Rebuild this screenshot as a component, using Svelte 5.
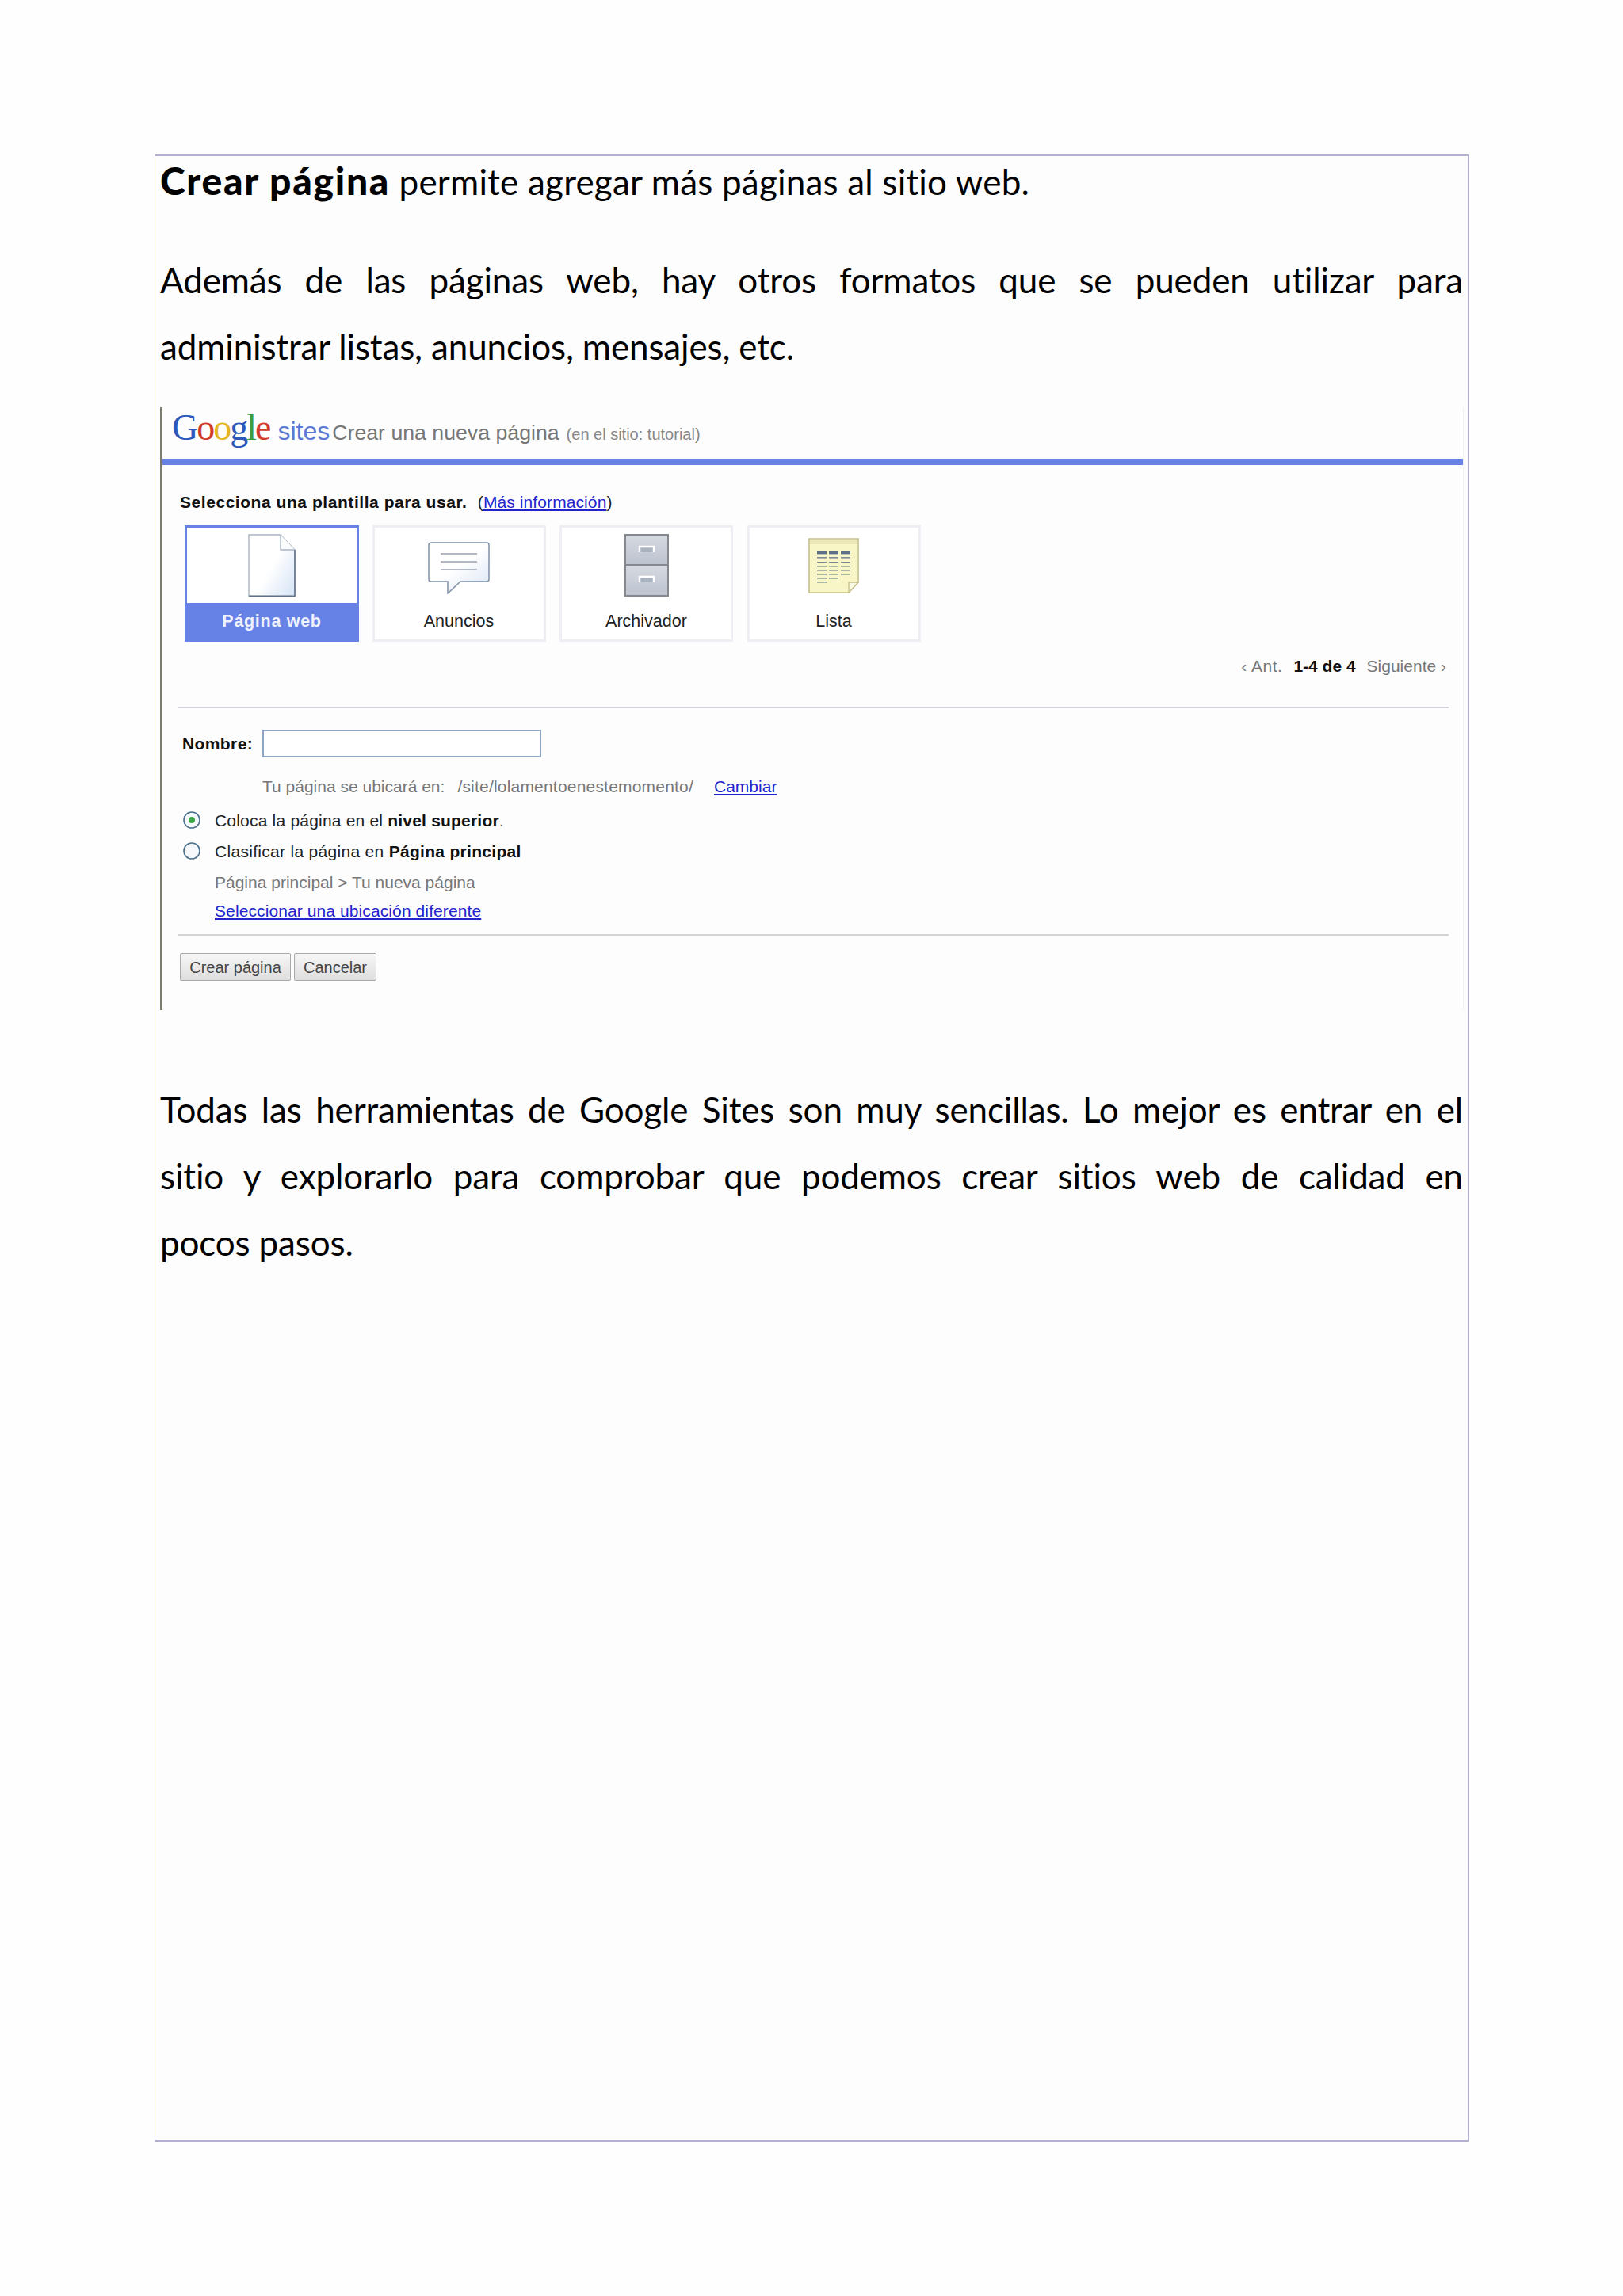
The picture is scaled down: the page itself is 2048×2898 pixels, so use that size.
<script>
    const templates = [
        { name: "Página web", icon: "doc", active: true },
        { name: "Anuncios", icon: "bubble" },
        { name: "Archivador", icon: "cabinet" },
        { name: "Lista", icon: "list" }
    ];

    // filas de la hoja de la plantilla Lista
    const listRows = [24, 30, 35, 40, 45, 50, 55];
    const listCols = [
        { x: 11, last: 55 },
        { x: 26, last: 50 },
        { x: 41, last: 45 }
    ];
</script>

<main class="frame">
    <p class="intro"><strong>Crear página</strong> permite agregar más páginas al sitio web.</p>

    <p class="body second">
        <span class="line">Además de las páginas web, hay otros formatos que se pueden utilizar para</span>
        <span class="line last">administrar listas, anuncios, mensajes, etc.</span>
    </p>

    <section class="shot">
        <header class="top">
            <span class="logo"><span class="c1">G</span><span class="c2">o</span><span class="c3">o</span><span class="c1">g</span><span class="c4">l</span><span class="c2">e</span></span>
            <span class="sites">sites</span>
            <span class="title">Crear una nueva página</span>
            <span class="where">(en el sitio: tutorial)</span>
        </header>

        <div class="row choose">
            <b>Selecciona una plantilla para usar.</b>
            <span class="more">(<a href="#top">Más información</a>)</span>
        </div>

        <div class="cards">
            {#each templates as t}
                <div class="card" class:active={t.active}>
                    <div class="icon">
                        {#if t.icon === "doc"}
                            <svg width="60" height="80" viewBox="0 0 60 80">
                                <defs>
                                    <linearGradient id="docFill" x1="0.2" y1="0.4" x2="1" y2="1">
                                        <stop offset="0.3" stop-color="#ffffff" />
                                        <stop offset="1" stop-color="#d5e3f5" />
                                    </linearGradient>
                                </defs>
                                <path d="M1 1H41L59 20V78H1Z" fill="url(#docFill)" stroke="#a9b5c4" stroke-width="1.4" />
                                <path d="M41 1V20H59" fill="#fbfcfe" stroke="#a9b5c4" stroke-width="1.4" />
                                <path d="M1 78.5H59V20" fill="none" stroke="#5f7089" stroke-width="1.5" />
                            </svg>
                        {:else if t.icon === "bubble"}
                            <svg class="bubble" width="78" height="66" viewBox="0 0 78 66">
                                <defs>
                                    <linearGradient id="bubbleFill" x1="0.3" y1="0.2" x2="1" y2="1">
                                        <stop offset="0.3" stop-color="#ffffff" />
                                        <stop offset="1" stop-color="#d8e4f4" />
                                    </linearGradient>
                                </defs>
                                <path d="M4 1H74a3 3 0 0 1 3 3V47a3 3 0 0 1-3 3H41L25 65V50H4a3 3 0 0 1-3-3V4a3 3 0 0 1 3-3Z" fill="url(#bubbleFill)" stroke="#7f90a8" stroke-width="1.5" />
                                <path d="M16 15H62M16 25H62M16 35H62" stroke="#9aa3b0" stroke-width="1.4" />
                            </svg>
                        {:else if t.icon === "cabinet"}
                            <svg width="56" height="80" viewBox="0 0 56 80">
                                <defs>
                                    <linearGradient id="drawer" x1="0" y1="0" x2="0" y2="1">
                                        <stop offset="0" stop-color="#d6dae0" />
                                        <stop offset="1" stop-color="#bcc3cf" />
                                    </linearGradient>
                                </defs>
                                <rect x="1" y="1" width="54" height="38" fill="url(#drawer)" stroke="#85888f" stroke-width="2" />
                                <rect x="1" y="39" width="54" height="39" fill="url(#drawer)" stroke="#85888f" stroke-width="2" />
                                <path d="M19 23V16H37V23" fill="#aab2c0" stroke="#fff" stroke-width="2.5" />
                                <path d="M19 61V54H37V61" fill="#aab2c0" stroke="#fff" stroke-width="2.5" />
                            </svg>
                        {:else}
                            <svg class="note" width="64" height="70" viewBox="0 0 64 70">
                                <path d="M1 1H63V56L51 69H1Z" fill="#f8f6c6" stroke="#c6c18a" stroke-width="1.6" />
                                <rect x="2" y="2" width="60" height="6" fill="#ece7b6" />
                                <path d="M51 69V56H63Z" fill="#fbfae6" stroke="#c6c18a" stroke-width="1.4" />
                                {#each listCols as col}
                                    <rect x={col.x} y="17" width="12" height="3.4" fill="#5d7087" />
                                    {#each listRows as r}
                                        {#if r <= col.last}
                                            <rect x={col.x} y={r} width="12" height="1.6" fill="#808a92" />
                                        {/if}
                                    {/each}
                                {/each}
                            </svg>
                        {/if}
                    </div>
                    <div class="label">{t.name}</div>
                </div>
            {/each}
        </div>

        <div class="row pager">
            <span class="dim ant">‹ Ant.</span>
            <b>1-4 de 4</b>
            <span class="dim">Siguiente ›</span>
        </div>

        <div class="rule first"></div>

        <div class="name">
            <b>Nombre:</b>
            <input type="text" />
        </div>

        <div class="row location">
            <span class="dim">Tu página se ubicará en:</span>
            <span class="dim path">/site/lolamentoenestemomento/</span>
            <a href="#top" class="change">Cambiar</a>
        </div>

        <div class="row option one">
            <svg width="24" height="24" viewBox="0 0 24 24">
                <circle cx="12" cy="12" r="10" fill="#f6f8fb" stroke="#4c6f8c" stroke-width="1.6" />
                <circle cx="12" cy="12" r="4" fill="#3aa845" />
            </svg>
            <span>Coloca la página en el <b>nivel superior</b><span class="dim">.</span></span>
        </div>
        <div class="row option two">
            <svg width="24" height="24" viewBox="0 0 24 24">
                <circle cx="12" cy="12" r="10" fill="#f6f8fb" stroke="#4c6f8c" stroke-width="1.6" />
            </svg>
            <span>Clasificar la página en <b>Página principal</b></span>
        </div>
        <div class="row sub trail dim">Página principal &gt; Tu nueva página</div>
        <div class="row sub other"><a href="#top">Seleccionar una ubicación diferente</a></div>

        <div class="rule second-rule"></div>

        <div class="actions">
            <button class="create">Crear página</button>
            <button class="cancel">Cancelar</button>
        </div>
    </section>

    <p class="body third">
        <span class="line">Todas las herramientas de Google Sites son muy sencillas. Lo mejor es entrar en el</span>
        <span class="line">sitio y explorarlo para comprobar que podemos crear sitios web de calidad en</span>
        <span class="line last">pocos pasos.</span>
    </p>
</main>

<style>
    :global(body) {
        background: #fefefe;
    }
    .frame {
        box-sizing: border-box;
        width: 1659px;
        height: 2508px;
        margin: 195px 0 195px 195px;
        padding: 1px 0 0 6px;
        border: 2px solid #b2b1d2;
        border-left: 1px solid #b4b4e0;
        background: #fdfdfd;
        font-family: Lato, "Liberation Sans", sans-serif;
        font-size: 44px;
        letter-spacing: -0.15px;
        color: #000;
    }
    p {
        margin: 0;
    }
    .intro {
        height: 60px;
        line-height: 60px;
        letter-spacing: 0.2px;
    }
    .intro strong {
        font-size: 48px;
        font-weight: 900;
        letter-spacing: 1.7px;
    }
    .body {
        width: 1644px;
        line-height: 84px;
    }
    .second {
        margin-top: 53px;
    }
    .third {
        margin-top: 83px;
    }
    .line {
        display: block;
        text-align: justify;
        text-align-last: justify;
    }
    .line.last {
        text-align-last: left;
    }

    .shot {
        box-sizing: border-box;
        width: 1645px;
        height: 761px;
        margin-top: 35px;
        border-left: 3px solid #7c7c70;
        border-right: 1px solid #f1f1f4;
        font-family: "Liberation Sans", Arial, sans-serif;
        font-size: 21px;
        letter-spacing: 0;
        color: #222;
    }
    .top {
        box-sizing: border-box;
        height: 73px;
        padding: 0 0 0 12px;
        display: flex;
        align-items: baseline;
        border-bottom: 8px solid #6782e7;
        color: #777;
    }
    .logo {
        font-family: "Liberation Serif", serif;
        font-size: 46px;
        line-height: 52px;
        letter-spacing: -2px;
    }
    .c1 { color: #2b59bb; }
    .c2 { color: #d23b2a; }
    .c3 { color: #e5b51f; }
    .c4 { color: #3b9b41; }
    .sites {
        margin-left: 10px;
        font-size: 32px;
        color: #5b79d2;
    }
    .title {
        margin-left: 3px;
        font-size: 26.7px;
    }
    .where {
        margin-left: 9px;
        font-size: 20px;
        color: #888;
    }

    .row {
        line-height: 30px;
    }
    a {
        color: #2323cc;
    }
    b {
        color: #111;
    }
    .dim {
        color: #777;
    }
    .choose {
        margin-top: 32px;
        padding-left: 22px;
        letter-spacing: 0.55px;
    }
    .more {
        margin-left: 7px;
        letter-spacing: 0.1px;
    }

    .cards {
        display: flex;
        gap: 17.5px;
        margin-top: 14px;
        padding-left: 28px;
    }
    .card {
        box-sizing: border-box;
        width: 219px;
        height: 147px;
        border: 3px solid #eeeef4;
        background: #fff;
        display: flex;
        flex-direction: column;
    }
    .card.active {
        width: 220px;
        margin-right: -1px;
        border-color: #6782e7;
    }
    .icon {
        height: 98px;
        display: flex;
        justify-content: center;
        padding-top: 8px;
        box-sizing: border-box;
    }
    .bubble {
        margin-top: 10px;
    }
    .note {
        margin-top: 5px;
    }
    .label {
        flex: 1;
        text-align: center;
        line-height: 46px;
        font-size: 21.5px;
    }
    .active .label {
        background: #6782e7;
        color: #eef1fd;
        font-weight: 700;
        letter-spacing: 0.7px;
    }

    .pager {
        display: flex;
        justify-content: flex-end;
        gap: 14px;
        margin-top: 16px;
        padding-right: 21px;
    }
    .ant {
        letter-spacing: 0.5px;
    }
    .rule {
        height: 2px;
        margin-left: 19px;
        width: 1604px;
        background: #d2d2dc;
    }
    .first {
        margin-top: 36px;
    }
    .second-rule {
        margin-top: 14px;
        background: #d4d4d4;
    }

    .name {
        display: flex;
        align-items: center;
        gap: 12px;
        margin-top: 27px;
        padding-left: 25px;
        line-height: 30px;
    }
    .name b {
        letter-spacing: 0.4px;
    }
    input {
        box-sizing: border-box;
        width: 352px;
        height: 35px;
        border: 2px solid #8ba5c2;
        background: #fff;
    }
    .location {
        display: flex;
        margin-top: 22px;
        padding-left: 126px;
    }
    .path {
        margin-left: 16px;
        letter-spacing: 0.2px;
    }
    .change {
        margin-left: 26px;
    }
    .option {
        display: flex;
        align-items: center;
        gap: 17px;
        padding-left: 25px;
        letter-spacing: 0.3px;
    }
    .option.one {
        letter-spacing: 0.2px;
    }
    .option svg {
        margin-bottom: 3px;
    }
    .one {
        margin-top: 13px;
    }
    .two {
        margin-top: 9px;
    }
    .sub {
        padding-left: 66px;
    }
    .trail {
        margin-top: 9px;
    }
    .other {
        margin-top: 6px;
        letter-spacing: 0.1px;
    }

    .actions {
        display: flex;
        gap: 4px;
        margin-top: 22px;
        padding-left: 22px;
    }
    button {
        box-sizing: border-box;
        height: 35px;
        padding: 2px 0 0;
        border: 1.5px solid #a9a9a9;
        border-radius: 2px;
        background: linear-gradient(#f7f7f7, #dedede);
        font-family: inherit;
        font-size: 20px;
        color: #444;
    }
    .create {
        width: 140px;
    }
    .cancel {
        width: 104px;
    }
</style>
